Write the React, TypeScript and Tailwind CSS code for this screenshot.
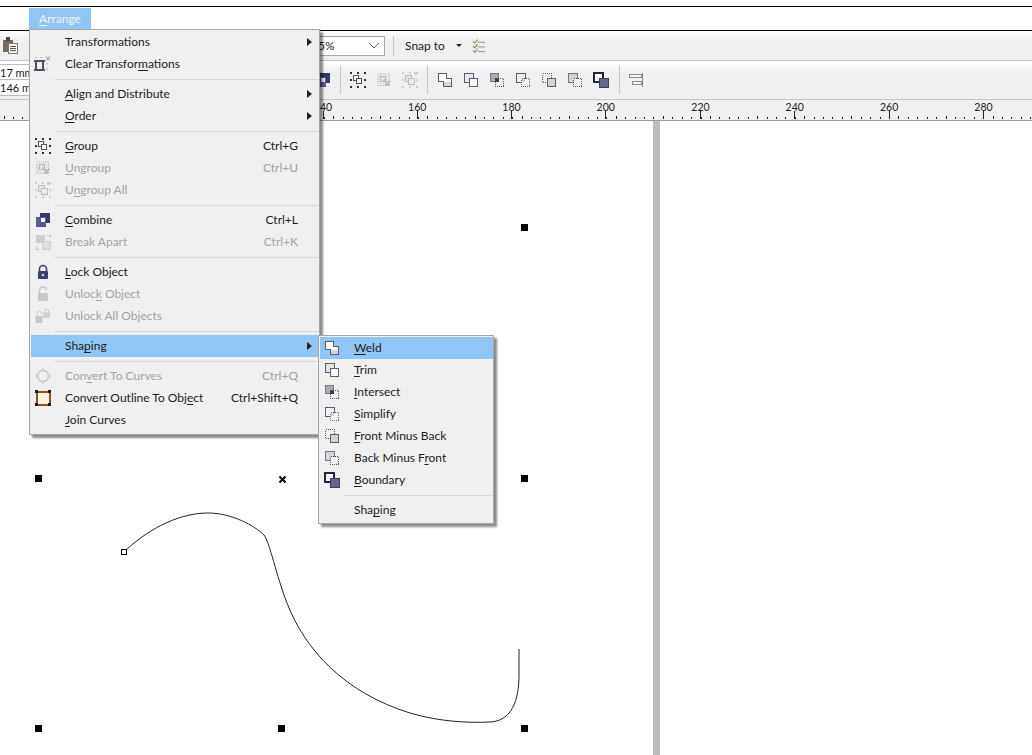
import type { ReactNode } from "react";

type ShapeKind = "weld" | "trim" | "intersect" | "simplify" | "frontMinus" | "backMinus" | "boundary";

// back square 1..10, front square 6..15
function ShapeIcon({ kind }: { kind: ShapeKind }) {
  const line = "#5a5f6e";
  return (
    <svg width="16" height="16" viewBox="0 0 16 16" shapeRendering="crispEdges">
      {kind === "weld" && (
        <>
          <path d="M1.5 1.5H9.5V6.5H14.5V14.5H6.5V9.5H1.5Z" fill="#fbfbfd" stroke={line} />
          <rect x="7" y="10" width="7" height="4" fill="#d5d6e2" />
        </>
      )}
      {kind === "trim" && (
        <>
          <rect x="1.5" y="1.5" width="9" height="9" fill="#e6e6ea" stroke={line} />
          <rect x="6.5" y="6.5" width="8" height="8" fill="#fafafc" stroke={line} />
        </>
      )}
      {kind === "intersect" && (
        <>
          <rect x="1.5" y="1.5" width="8" height="8" fill="#a9a9b4" stroke="#777a86" />
          <rect x="6" y="6" width="4" height="4" fill="#3d3f55" />
          <rect x="6.5" y="6.5" width="8" height="8" fill="none" stroke="#555" strokeDasharray="1 1" />
        </>
      )}
      {kind === "simplify" && (
        <>
          <rect x="1.5" y="1.5" width="9" height="9" fill="#f1f1f4" stroke={line} />
          <rect x="6.5" y="6.5" width="8" height="8" fill="#fafafc" stroke="#666" strokeDasharray="1 1" />
          <rect x="7" y="7" width="3" height="3" fill="#d0d0d8" />
        </>
      )}
      {kind === "frontMinus" && (
        <>
          <rect x="1.5" y="1.5" width="9" height="9" fill="none" stroke="#555" strokeDasharray="1 1" />
          <rect x="6.5" y="6.5" width="8" height="8" fill="#d2d2d8" stroke={line} />
        </>
      )}
      {kind === "backMinus" && (
        <>
          <rect x="1.5" y="1.5" width="9" height="9" fill="#d2d2d8" stroke="#777a86" />
          <rect x="6.5" y="6.5" width="8" height="8" fill="#f2f2f2" stroke="#555" strokeDasharray="1 1" />
        </>
      )}
      {kind === "boundary" && (
        <>
          <rect x="1" y="1" width="9" height="9" fill="#fdfdfd" stroke="#23263a" strokeWidth="2" />
          <rect x="6" y="6" width="9" height="9" fill="#62688c" stroke="#3a3e5c" />
        </>
      )}
    </svg>
  );
}

function Handles({ x = 1, y = 1, size = 14, color = "#333" }: { x?: number; y?: number; size?: number; color?: string }) {
  const mid = size / 2;
  const pts = [
    [0, 0], [mid, 0], [size, 0],
    [0, mid], [size, mid],
    [0, size], [mid, size], [size, size],
  ];
  return (
    <>
      {pts.map(([a, b]) => (
        <rect key={`${a}-${b}`} x={x + a - 1} y={y + b - 1} width="2" height="2" fill={color} />
      ))}
    </>
  );
}

function GroupIcon() {
  return (
    <svg width="16" height="16" viewBox="0 0 16 16" shapeRendering="crispEdges">
      <Handles />
      <rect x="3.5" y="3.5" width="5" height="5" fill="#f6f6f8" stroke="#555" />
      <rect x="6.5" y="6.5" width="5" height="5" fill="#fff" stroke="#555" />
    </svg>
  );
}

function UngroupIcon() {
  return (
    <svg width="16" height="16" viewBox="0 0 16 16" shapeRendering="crispEdges">
      <rect x="1.5" y="1.5" width="12" height="12" fill="#e4e4e4" stroke="#c2c2c2" strokeDasharray="1 1" />
      <rect x="4" y="4" width="5" height="5" fill="none" stroke="#bcbcbc" />
      <path d="M8 8 L14 14 M14 9 L9 14" stroke="#bcbcbc" strokeWidth="1.5" />
    </svg>
  );
}

function UngroupAllIcon() {
  return (
    <svg width="16" height="16" viewBox="0 0 16 16" shapeRendering="crispEdges">
      <Handles color="#cfcfcf" />
      <rect x="3.5" y="3.5" width="6" height="6" fill="#e8e8e8" stroke="#bdbdbd" />
      <rect x="6.5" y="6.5" width="6" height="6" fill="#ececec" stroke="#bdbdbd" />
      <rect x="12" y="0" width="3" height="3" fill="#d0d0d0" />
    </svg>
  );
}

function CombineIcon() {
  return (
    <svg width="16" height="16" viewBox="0 0 16 16" shapeRendering="crispEdges">
      <rect x="5" y="1" width="10" height="10" fill="#34386a" />
      <rect x="1" y="5" width="10" height="10" fill="#555b92" />
      <rect x="6" y="6" width="4" height="4" fill="#f4f4f4" />
    </svg>
  );
}

function BreakApartIcon() {
  return (
    <svg width="16" height="16" viewBox="0 0 16 16" shapeRendering="crispEdges">
      <rect x="1" y="1" width="9" height="8" fill="#cfcfcf" />
      <rect x="7" y="7" width="8" height="8" fill="#dedede" stroke="#cfcfcf" />
      <path d="M12 1h3v3M1 12v3h3" fill="none" stroke="#c4c4c4" />
    </svg>
  );
}

function LockIcon({ color, open }: { color: string; open?: boolean }) {
  return (
    <svg width="16" height="16" viewBox="0 0 16 16">
      <path
        d={open ? "M4.5 7V4.5a3.5 3.5 0 0 1 7 0" : "M4.5 8V5a3.5 3.5 0 0 1 7 0V8"}
        fill="none"
        stroke={color}
        strokeWidth="1.6"
      />
      <rect x="3" y="7" width="10" height="8" rx="1" fill={color} />
      {!open && <circle cx="8" cy="11" r="1.3" fill="#c9cbe8" />}
    </svg>
  );
}

function UnlockAllIcon() {
  return (
    <svg width="16" height="16" viewBox="0 0 16 16">
      <rect x="0.5" y="8" width="7" height="7" fill="#c8c8c8" />
      <path d="M2 8V6a2.5 2.5 0 0 1 5 0" fill="none" stroke="#c8c8c8" />
      <rect x="8" y="4" width="7" height="6" fill="#d2d2d2" />
      <path d="M9.5 4V3a2 2 0 0 1 4 0V4" fill="none" stroke="#c8c8c8" />
    </svg>
  );
}

function ClearTransformIcon() {
  return (
    <svg width="17" height="16" viewBox="0 0 17 16" shapeRendering="crispEdges">
      <path d="M0 5h11M0 14h11M2 5v9M9 5v9" stroke="#4e5260" strokeWidth="1.4" fill="none" />
      <rect x="1" y="1" width="2" height="1" fill="#b5c4cc" />
      <rect x="6" y="1" width="2" height="1" fill="#b5c4cc" />
      <rect x="12" y="7" width="2" height="2" fill="#c9d0d4" />
      <rect x="12" y="12" width="2" height="2" fill="#c9d0d4" />
      <path d="M12 0.5 L16 4.5 M16 0.5 L12 4.5" stroke="#d9646a" shapeRendering="auto" />
    </svg>
  );
}

function ToCurvesIcon() {
  return (
    <svg width="16" height="16" viewBox="0 0 16 16">
      <circle cx="8" cy="8" r="5.5" fill="#f2f2f2" stroke="#c6c6c6" strokeWidth="1.4" />
      <rect x="6.5" y="0.5" width="3" height="3" fill="#d4d4d4" />
      <rect x="6.5" y="12.5" width="3" height="3" fill="#d4d4d4" />
      <rect x="0.5" y="6.5" width="3" height="3" fill="#d4d4d4" />
      <rect x="12.5" y="6.5" width="3" height="3" fill="#d4d4d4" />
    </svg>
  );
}

function OutlineIcon() {
  return (
    <svg width="16" height="16" viewBox="0 0 16 16" shapeRendering="crispEdges">
      <rect x="1.5" y="1.5" width="13" height="13" fill="#fbf2e4" stroke="#8a5228" strokeWidth="2" />
      <rect x="0" y="0" width="3" height="3" fill="#1e1e1e" />
      <rect x="13" y="0" width="3" height="3" fill="#1e1e1e" />
      <rect x="0" y="13" width="3" height="3" fill="#1e1e1e" />
      <rect x="13" y="13" width="3" height="3" fill="#1e1e1e" />
    </svg>
  );
}

function Clipboard() {
  return (
    <svg width="15" height="17" viewBox="0 0 15 17" shapeRendering="crispEdges">
      <rect x="0" y="3" width="10" height="12" fill="#7a6a58" />
      <rect x="3" y="0" width="4" height="4" fill="#4a4a4a" />
      <rect x="5.5" y="6.5" width="9" height="10" fill="#fafafa" stroke="#777" />
      <path d="M7 9h6M7 11h6M7 13h6" stroke="#555" />
    </svg>
  );
}

function SnapChecklist() {
  return (
    <svg width="13" height="16" viewBox="0 0 14 16">
      <path d="M1 3l2 2 3-4M1 8l2 2 3-4M1 13l2 2 3-4" fill="none" stroke="#6d9a52" strokeWidth="1.2" />
      <path d="M6 4h8M6 9h8M6 14h8" stroke="#8a8f8a" />
    </svg>
  );
}

function AlignIcon() {
  return (
    <svg width="16" height="16" viewBox="0 0 16 16" shapeRendering="crispEdges">
      <path d="M14.5 1v14" stroke="#8a8a8a" />
      <rect x="1.5" y="2.5" width="12" height="3" fill="#f4f4f4" stroke="#8c8c8c" />
      <rect x="4.5" y="9.5" width="9" height="3" fill="#f4f4f4" stroke="#8c8c8c" />
    </svg>
  );
}

function Arrow() {
  return (
    <svg width="5" height="8" viewBox="0 0 5 8">
      <path d="M0 0L5 4L0 8Z" fill="#222" />
    </svg>
  );
}

// label with its mnemonic letter underlined
function Label({ text, u }: { text: string; u?: number }) {
  if (u === undefined) return <span>{text}</span>;
  return (
    <span>
      {text.slice(0, u)}
      <u className="underline-offset-2">{text[u]}</u>
      {text.slice(u + 1)}
    </span>
  );
}

function MenuRow({
  text,
  u,
  icon,
  shortcut,
  disabled,
  active,
  sub,
}: {
  text: string;
  u?: number;
  icon?: ReactNode;
  shortcut?: string;
  disabled?: boolean;
  active?: boolean;
  sub?: boolean;
}) {
  return (
    <div
      className={`flex h-[22px] items-center ${active ? "bg-[#8fc6f6]" : ""} ${
        disabled ? "text-[#a3a3a3]" : "text-[#1c1c1c]"
      }`}
    >
      <div className="mr-[11px] flex w-[23px] shrink-0 items-center justify-center">{icon}</div>
      <Label text={text} u={u} />
      <div className="ml-auto flex items-center">
        {shortcut && <span className="mr-[21px]">{shortcut}</span>}
        {sub && (
          <span className="mr-[7px] flex">
            <Arrow />
          </span>
        )}
      </div>
    </div>
  );
}

function MenuSep({ left }: { left: string }) {
  return (
    <div className="flex h-[8px] items-center">
      <div className={`h-px flex-1 bg-[#d8d8d8] ${left}`} />
    </div>
  );
}

function ToolSep({ className }: { className: string }) {
  return <div className={`w-px bg-[#c9c9c9] ${className}`} />;
}

function Cell({ children }: { children: ReactNode }) {
  return <div className="flex w-[26px] shrink-0 justify-center">{children}</div>;
}

const rulerLabels = [
  { v: 140, x: 322.5 },
  { v: 160, x: 416.7 },
  { v: 180, x: 511 },
  { v: 200, x: 605.2 },
  { v: 220, x: 700 },
  { v: 240, x: 794.2 },
  { v: 260, x: 888.6 },
  { v: 280, x: 983 },
];

const rulerTicks = Array.from({ length: 112 }, (_, i) => 3.5 + i * 9.42);

const handles = [
  [39, 478],
  [525, 478],
  [39, 728],
  [282, 728],
  [525, 728],
  [525, 227],
];

export default function App() {
  return (
    <div className="relative flex h-[755px] w-[1032px] flex-col overflow-hidden bg-white font-['Lato',sans-serif] text-[12px] text-[#1c1c1c]">
      {/* Menu bar */}
      <div className="mt-[6px] flex h-[25px] items-end border-y border-t-black border-b-black bg-white pl-[29px]">
        <div className="flex h-[22px] w-[62px] items-center justify-center bg-[#8fc6f6] text-[#eef6fd]">
          <Label text="Arrange" u={0} />
        </div>
      </div>

      {/* Property bar */}
      <div className="flex h-[30px] shrink-0 items-center border-b border-[#c6c6c6] bg-linear-to-b from-white to-[#f0f0f0] to-30% pl-[3px]">
        <Clipboard />
        <div className="ml-[287px] flex h-[20px] w-[80px] items-center border border-[#a8a8a8] bg-white pl-[5px] pr-[3px]">
          <span className="mt-[1px]">75%</span>
          <svg className="ml-auto mr-[1px]" width="12" height="7" viewBox="0 0 12 7">
            <path d="M1 1l5 5 5-5" fill="none" stroke="#666" />
          </svg>
        </div>
        <ToolSep className="ml-[8px] h-[20px]" />
        <span className="ml-[11px] mt-[1px] w-[38px] whitespace-nowrap">Snap to</span>
        <svg className="ml-[13px]" width="6" height="3" viewBox="0 0 6 3">
          <path d="M0 0h6L3 3Z" fill="#222" />
        </svg>
        <span className="ml-[10px] flex">
          <SnapChecklist />
        </span>
      </div>

      {/* Toolbar */}
      <div className="flex h-[39px] shrink-0 items-center border-b border-[#c6c6c6] bg-linear-to-b from-white to-[#f0f0f0] to-30%">
        <div className="flex w-[50px] shrink-0 flex-col overflow-hidden whitespace-nowrap border-y border-[#bdbdbd] bg-white text-[11px] leading-[15px]">
          <div className="h-[15px] border-b border-[#bdbdbd]">17 mm</div>
          <div className="h-[15px]">146 mm</div>
        </div>
        <div className="ml-[260px] flex items-center">
          <Cell>
            <CombineIcon />
          </Cell>
          <ToolSep className="ml-[4px] h-[28px]" />
          <div className="ml-[4px] flex">
            <Cell>
              <GroupIcon />
            </Cell>
            <Cell>
              <UngroupIcon />
            </Cell>
            <Cell>
              <UngroupAllIcon />
            </Cell>
          </div>
          <ToolSep className="ml-[4px] h-[28px]" />
          <div className="ml-[4px] flex">
            <Cell>
              <ShapeIcon kind="weld" />
            </Cell>
            <Cell>
              <ShapeIcon kind="trim" />
            </Cell>
            <Cell>
              <ShapeIcon kind="intersect" />
            </Cell>
            <Cell>
              <ShapeIcon kind="simplify" />
            </Cell>
            <Cell>
              <ShapeIcon kind="frontMinus" />
            </Cell>
            <Cell>
              <ShapeIcon kind="backMinus" />
            </Cell>
            <Cell>
              <ShapeIcon kind="boundary" />
            </Cell>
          </div>
          <ToolSep className="ml-[5px] h-[28px]" />
          <div className="ml-[3px]">
            <Cell>
              <AlignIcon />
            </Cell>
          </div>
        </div>
      </div>

      {/* Ruler */}
      <div className="h-[21px] shrink-0 border-b border-[#9a9a9a] bg-[#f0f0f0]">
        <svg width="1032" height="20" viewBox="0 100 1032 20" shapeRendering="crispEdges" className="block">
          {rulerTicks.map((x, i) => (
            <rect key={x} x={Math.round(x)} y={i % 5 === 0 ? 116 : 117} width="1" height={i % 5 === 0 ? 3 : 2} fill="#222" />
          ))}
          {rulerLabels.map((l) => (
            <g key={l.v}>
              <rect x={Math.round(l.x)} y="111" width="1" height="8" fill="#222" />
              <text x={l.x + 0.5} y="111" textAnchor="middle" fontSize="10.5" fill="#222" fontFamily="Lato, sans-serif">
                {l.v}
              </text>
            </g>
          ))}
        </svg>
      </div>

      {/* Canvas */}
      <div className="relative flex flex-1">
        <div className="w-[653px] bg-white" />
        <div className="w-[7px] bg-[#bcbcbc]" />
        <div className="flex-1 bg-white" />
        <svg
          className="absolute left-0 top-0"
          width="653"
          height="634"
          viewBox="0 121 653 634"
        >
          <path
            d="M126 550 C 152 526 182 513 208 513 C 232 513 255 526 264 535 C 270 543 276 575 287 603 C 305 650 345 693 410 713 C 440 722 470 723 490 722 C 512 721 519 700 519 675 L 519 649"
            fill="none"
            stroke="#222"
            strokeWidth="1"
          />
          <g shapeRendering="crispEdges">
            {handles.map(([x, y]) => (
              <rect key={`${x}-${y}`} x={x - 4} y={y - 3} width="7" height="7" fill="#000" />
            ))}
            <rect x="121.5" y="549.5" width="5" height="5" fill="#fff" stroke="#000" />
          </g>
          <path d="M279.5 476.5 L285.5 482.5 M285.5 476.5 L279.5 482.5" stroke="#000" strokeWidth="2" />
        </svg>
      </div>

      {/* Arrange menu */}
      <div className="absolute left-[29px] top-[29px] z-10 w-[291px] border border-[#a6a6a6] bg-[#f0f0f0] pb-[3px] pl-px pt-[1px] shadow-[3px_3px_2px_rgba(0,0,0,0.45)]">
        <MenuRow text="Transformations" sub />
        <MenuRow text="Clear Transformations" u={14} icon={<ClearTransformIcon />} />
        <MenuSep left="ml-[24px]" />
        <MenuRow text="Align and Distribute" u={0} sub />
        <MenuRow text="Order" u={0} sub />
        <MenuSep left="ml-[24px]" />
        <MenuRow text="Group" u={0} shortcut="Ctrl+G" icon={<GroupIcon />} />
        <MenuRow text="Ungroup" u={0} shortcut="Ctrl+U" disabled icon={<UngroupIcon />} />
        <MenuRow text="Ungroup All" u={1} disabled icon={<UngroupAllIcon />} />
        <MenuSep left="ml-[24px]" />
        <MenuRow text="Combine" u={0} shortcut="Ctrl+L" icon={<CombineIcon />} />
        <MenuRow text="Break Apart" shortcut="Ctrl+K" disabled icon={<BreakApartIcon />} />
        <MenuSep left="ml-[24px]" />
        <MenuRow text="Lock Object" u={0} icon={<LockIcon color="#3b3f6c" />} />
        <MenuRow text="Unlock Object" u={5} disabled icon={<LockIcon color="#c8c8c8" open />} />
        <MenuRow text="Unlock All Objects" disabled icon={<UnlockAllIcon />} />
        <MenuSep left="ml-[24px]" />
        <MenuRow text="Shaping" u={3} sub active />
        <MenuSep left="ml-[24px]" />
        <MenuRow text="Convert To Curves" u={3} shortcut="Ctrl+Q" disabled icon={<ToCurvesIcon />} />
        <MenuRow text="Convert Outline To Object" u={22} shortcut="Ctrl+Shift+Q" icon={<OutlineIcon />} />
        <MenuRow text="Join Curves" u={0} />
      </div>

      {/* Shaping submenu */}
      <div className="absolute left-[318px] top-[335px] z-20 w-[176px] border border-[#a6a6a6] bg-[#f0f0f0] pb-[2px] pl-px pt-[1px] shadow-[3px_3px_2px_rgba(0,0,0,0.45)]">
        <MenuRow text="Weld" u={0} active icon={<ShapeIcon kind="weld" />} />
        <MenuRow text="Trim" u={0} icon={<ShapeIcon kind="trim" />} />
        <MenuRow text="Intersect" u={0} icon={<ShapeIcon kind="intersect" />} />
        <MenuRow text="Simplify" u={0} icon={<ShapeIcon kind="simplify" />} />
        <MenuRow text="Front Minus Back" u={0} icon={<ShapeIcon kind="frontMinus" />} />
        <MenuRow text="Back Minus Front" u={12} icon={<ShapeIcon kind="backMinus" />} />
        <MenuRow text="Boundary" u={0} icon={<ShapeIcon kind="boundary" />} />
        <MenuSep left="ml-[24px]" />
        <MenuRow text="Shaping" u={3} />
      </div>
    </div>
  );
}
